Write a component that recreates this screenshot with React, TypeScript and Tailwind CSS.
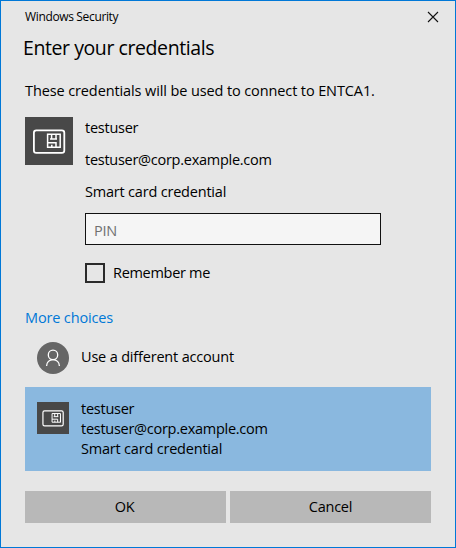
import React from "react";

function SmartCardIcon({ className }: { className: string }) {
  return (
    <svg className={className} viewBox="0 0 48 48" fill="none">
      <rect width="48" height="48" fill="#484848" />
      <rect x="8.9" y="13.3" width="30.4" height="22.6" rx="2.4" stroke="#fff" strokeWidth="1.8" />
      <path
        d="M22.6 17.3h12.6v13H22.6zM26.6 18v4M31 18v4M25 22h7M22.6 25.8h8.4v4.5M26.8 27.8v2.5M35.2 22v8.3"
        stroke="#fff"
        strokeWidth="1.5"
      />
    </svg>
  );
}

function PersonIcon() {
  return (
    <svg className="size-8 shrink-0" viewBox="0 0 32 32" fill="none">
      <circle cx="16" cy="16" r="16" fill="#666" />
      <circle cx="16" cy="12.9" r="4.7" stroke="#fff" strokeWidth="1.3" />
      <path d="M9.6 24c0-3.8 2.8-6.4 6.4-6.4s6.4 2.6 6.4 6.4" stroke="#fff" strokeWidth="1.3" />
    </svg>
  );
}

export default function App() {
  return (
    <div className="flex h-[548px] w-[456px] flex-col border border-[#0078d7] bg-[#e6e6e6] pl-6 pr-6 font-['Open_Sans','Noto_Sans',sans-serif] text-[14.5px] leading-5 tracking-[-0.25px] text-black">
      <header className="flex h-8 items-center justify-between">
        <span className="text-[12px] tracking-[-0.35px]">Windows Security</span>
        <button aria-label="Close" className="-mr-2 flex size-3 items-center justify-center">
          <svg className="size-3" viewBox="0 0 12 12" stroke="#111" strokeWidth="1.1">
            <path d="M1 1l10 10M11 1L1 11" />
          </svg>
        </button>
      </header>
      <h1 className="-ml-0.5 h-[48px] text-[19.5px] leading-[30px] tracking-[-0.42px]">Enter your credentials</h1>
      <p className="whitespace-nowrap tracking-[-0.11px]">These credentials will be used to connect to ENTCA1.</p>

      <section className="mt-4 flex gap-3">
        <SmartCardIcon className="size-12 shrink-0" />
        <div className="flex flex-col pt-px">
          <p>testuser</p>
          <p className="mt-3 tracking-[-0.27px]">testuser@corp.example.com</p>
          <p className="mt-3 tracking-[-0.2px]">Smart card credential</p>
          <input
            placeholder="PIN"
            className="mt-[11px] h-8 w-[296px] border border-[#111] bg-[#f5f5f5] px-2 pt-0.5 placeholder:text-[#707070] placeholder:opacity-100"
          />
          <label className="mt-[18px] flex h-5 items-center gap-2">
            <span className="size-5 border-2 border-[#2b2b2b]" />
            <span className="tracking-[-0.3px]">Remember me</span>
          </label>
        </div>
      </section>

      <a className="mt-[25px] tracking-[-0.15px] text-[#0078d7]">More choices</a>
      <div className="mt-[14px] flex h-8 items-center gap-3 pl-3">
        <PersonIcon />
        <span className="-mt-0.5 tracking-[-0.18px]">Use a different account</span>
      </div>
      <div className="mt-[13px] flex h-[84px] w-[406px] gap-3 bg-[#8ab8df] pl-3 pt-3">
        <SmartCardIcon className="mt-[3px] size-8 shrink-0" />
        <div>
          <p>testuser</p>
          <p className="tracking-[-0.27px]">testuser@corp.example.com</p>
          <p className="tracking-[-0.2px]">Smart card credential</p>
        </div>
      </div>
      <footer className="mt-5 grid w-[406px] grid-cols-2 gap-1">
        <button className="h-8 bg-[#b8b8b8] pr-0.5">OK</button>
        <button className="h-8 bg-[#b8b8b8]">Cancel</button>
      </footer>
    </div>
  );
}
